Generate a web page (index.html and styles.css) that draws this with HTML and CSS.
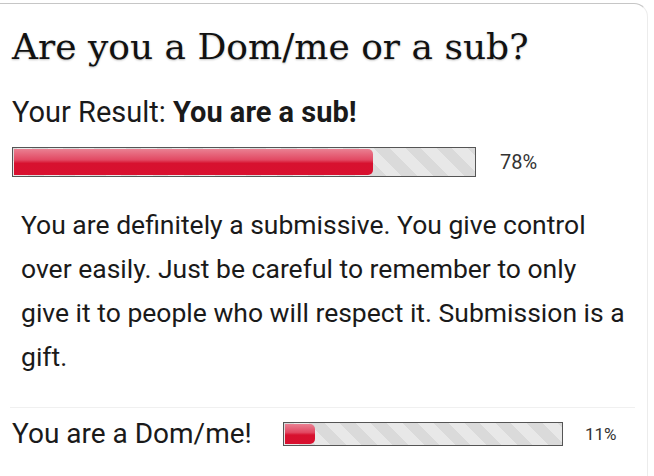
FILE: index.html
```html
<!DOCTYPE html>
<html lang="en">
<head>
    <meta charset="UTF-8">
    <meta name="viewport" content="width=device-width, initial-scale=1.0">
    <title>Are you a Dom/me or a sub?</title>
    <link rel="stylesheet" href="styles.css">
</head>
<body>
    <div class="card">
        <h1>Are you a Dom/me or a sub?</h1>

        <p class="result">Your Result: <b>You are a sub!</b></p>
        <div class="bar-row">
            <div class="bar"><div class="fill" style="width: 78%"></div></div>
            <span class="pct">78%</span>
        </div>

        <p class="desc">You are definitely a submissive. You give control over easily. Just be careful to remember to only give it to people who will respect it. Submission is a gift.</p>

        <div class="other">
            <span class="other-name">You are a Dom/me!</span>
            <div class="bar small"><div class="fill" style="width: 11%"></div></div>
            <span class="pct small-pct">11%</span>
        </div>
    </div>
</body>
</html>
```

FILE: styles.css
```css
body { margin: 0; background: #fff; font-family: Roboto, "Liberation Sans", sans-serif; color: #1a1a1a; }
.card { margin: 3px 6px 0 0; padding: 22px 0 0 12px; height: 460px; border-top: 1px solid #c6c6c6; border-right: 1px solid #ececec; border-top-right-radius: 14px; }
h1 { font-family: "DejaVu Serif", "Liberation Serif", serif; font-weight: normal; font-size: 36px; line-height: 42px; margin: 0; color: #111; text-shadow: 0 1px 2px rgba(0,0,0,0.25); }
.result { font-size: 29px; line-height: 33px; margin: 28px 0 0; }
.result b { font-weight: bold; }
.bar-row { display: flex; align-items: center; margin-top: 18px; }
.bar { width: 460px; height: 26px; border: 1px solid #555; padding: 1px; box-sizing: content-box; background: repeating-linear-gradient(45deg, #e8e8e8 0 11px, #dadada 11px 22px); }
.fill { height: 100%; border-radius: 0 5px 5px 0; background: linear-gradient(#ea8092 0%, #e24862 42%, #d7112f 55%, #d8102f 100%); }
.pct { font-size: 20px; color: #333; margin-left: 24px; }
.desc { font-size: 26.5px; line-height: 44px; width: 607px; margin: 26px 0 0 9px; }
.other { display: flex; align-items: center; margin: 28px 12px 0 -2px; padding: 9px 0 0 2px; border-top: 1px solid #f0f0f0; }
.other-name { font-size: 28px; line-height: 33px; width: 271px; }
.bar.small { width: 276px; height: 20px; }
.small-pct { font-size: 17px; margin-left: 22px; }
```
